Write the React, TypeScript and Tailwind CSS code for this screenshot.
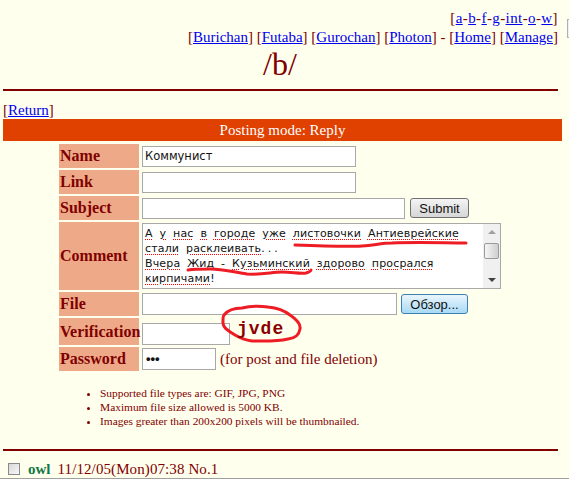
const inputCls = "block h-[21px] border border-[#a8a8a8] bg-white px-[2px] font-['DejaVu_Sans',sans-serif] text-[11.5px] text-[#111]";
const labelCls = "flex w-[80px] items-center bg-[#eeaa88] pl-px text-[16px] font-bold text-[#800000]";
const linkCls = "text-[#0000ee] underline";

function Row({ label, height, children }: { label: string; height: string; children: React.ReactNode }) {
  return (
    <div className={`flex gap-[3px] ${height}`}>
      <div className={labelCls}>{label}</div>
      <div className="flex items-center">{children}</div>
    </div>
  );
}

function Word({ children }: { children: string }) {
  return <span className="underline decoration-[#ff0000] decoration-dotted decoration-1 underline-offset-2">{children}</span>;
}

export default function App() {
  return (
    <div className="relative h-[479px] w-[569px] overflow-hidden bg-[#ffffee] font-['Liberation_Serif',serif] text-[15px] leading-[18px] text-[#800000]">
      {/* top links */}
      <div className="pt-[9px] pr-[11px] text-right leading-[19px]">
        <div className="tracking-[0.4px]">
          [<a className={linkCls}>a</a>-<a className={linkCls}>b</a>-<a className={linkCls}>f</a>-<a className={linkCls}>g</a>-<a className={linkCls}>int</a>-<a className={linkCls}>o</a>-<a className={linkCls}>w</a>]
        </div>
        <div>
          [<a className={linkCls}>Burichan</a>] [<a className={linkCls}>Futaba</a>] [<a className={linkCls}>Gurochan</a>] [<a className={linkCls}>Photon</a>] - [<a className={linkCls}>Home</a>] [<a className={linkCls}>Manage</a>]
        </div>
      </div>
      <div className="-mt-px pl-[263px] text-[32px] leading-[36px]">/b/</div>
      <div className="mx-[3px] mt-[7px] w-[555px] border-t-2 border-[#800000]" />
      <div className="mt-[10px] pl-[3px]">
        [<a className={linkCls}>Return</a>]
      </div>
      <div className="mx-[3px] h-[22px] w-[559px] bg-[#e04000] text-center leading-[22px] text-white">Posting mode: Reply</div>

      {/* post form */}
      <div className="mt-[3px] flex flex-col gap-[2px] pl-[59px]">
        <Row label="Name" height="h-[24px]">
          <div className={`${inputCls} w-[214px] leading-[19px]`}>Коммунист</div>
        </Row>
        <Row label="Link" height="h-[24px]">
          <div className={`${inputCls} w-[214px]`} />
        </Row>
        <Row label="Subject" height="h-[24px]">
          <div className={`${inputCls} w-[263px]`} />
          <button className="ml-[5px] h-[20px] w-[59px] rounded-[3px] border border-[#707070] bg-gradient-to-b from-[#f4f4f4] to-[#d6d6d6] font-['Liberation_Sans',sans-serif] text-[13px] leading-none text-[#111]">Submit</button>
        </Row>
        <Row label="Comment" height="h-[68px]">
          <div className="relative flex h-[66px] w-[359px] border border-[#a8a8a8] bg-white">
            <div className="flex-1 overflow-hidden px-[2px] pt-[2px] font-['DejaVu_Sans',sans-serif] text-[11px] leading-[15px] tracking-[0.15px] [word-spacing:3.2px] text-[#111]">
              <div><Word>А</Word> <Word>у</Word> <Word>нас</Word> <Word>в</Word> <Word>городе</Word> <Word>уже</Word> <Word>листовочки</Word> <Word>Антиеврейские</Word></div>
              <div><Word>стали</Word> <Word>расклеивать</Word><span className="tracking-[3px]">...</span></div>
              <div><Word>Вчера</Word> <Word>Жид</Word> - <Word>Кузьминский</Word> <Word>здорово</Word> <Word>просрался</Word></div>
              <div><Word>кирпичами</Word>!</div>
            </div>
            {/* textarea scrollbar */}
            <div className="flex w-[17px] flex-col items-center justify-between bg-[#f0f0f0] py-[6px]">
              <div className="h-0 w-0 border-x-[4px] border-b-[4px] border-x-transparent border-b-[#a0a0a0]" />
              <div className="absolute right-[1px] top-[19px] h-[16px] w-[15px] rounded-[2px] border border-[#9a9a9a] bg-gradient-to-r from-[#f6f6f6] to-[#cfcfcf]" />
              <div className="h-0 w-0 border-x-[4px] border-t-[4px] border-x-transparent border-t-[#404040]" />
            </div>
          </div>
        </Row>
        <Row label="File" height="h-[24px]">
          <div className={`${inputCls} h-[22px] w-[255px]`} />
          <button className="ml-[4px] h-[20px] w-[67px] rounded-[3px] border border-[#3c7fb1] bg-gradient-to-b from-[#eaf6fd] to-[#a7d9f5] font-['Liberation_Sans',sans-serif] text-[13px] leading-none text-[#111]">Обзор...</button>
        </Row>
        <Row label="Verification" height="h-[27px]">
          <div className={`${inputCls} mt-[4px] h-[22px] w-[88px]`} />
        </Row>
        <Row label="Password" height="h-[24px]">
          <div className={`${inputCls} h-[22px] w-[74px] pl-[3px] font-['Liberation_Sans',sans-serif] text-[13px] font-bold leading-[20px]`}>•••</div>
          <span className="ml-[4px]">(for post and file deletion)</span>
        </Row>
      </div>

      <ul className="mt-[15px] flex list-disc flex-col pl-[100px] text-[11.4px] leading-[14px]">
        <li>Supported file types are: GIF, JPG, PNG</li>
        <li>Maximum file size allowed is 5000 KB.</li>
        <li>Images greater than 200x200 pixels will be thumbnailed.</li>
      </ul>
      <div className="mx-[3px] mt-[21px] w-[555px] border-t-2 border-[#800000]" />
      <div className="mt-[9px] flex items-center pl-[8px]">
        <div className="h-[12px] w-[12px] border border-[#8a8a8a] bg-gradient-to-br from-[#d8d8d8] to-[#f8f8f8]" />
        <span className="ml-[8px] font-bold text-[#117743]">owl</span>
        <span className="ml-[7px] tracking-[0.1px]">11/12/05(Mon)07:38 No.1</span>
      </div>
      <div className="absolute bottom-0 left-0 h-px w-full bg-[#a0a0a0]" />
      {/* sliver of the page scrollbar */}
      <div className="absolute right-0 top-[19px] h-[19px] w-[2px] border-y border-l border-[#b0b0b0] bg-[#f0f0f0]" />

      {/* pen marks drawn over the screenshot */}
      <svg className="pointer-events-none absolute left-0 top-0" width="569" height="479" fill="none" stroke="#ee1c25" strokeWidth="3" strokeLinecap="round" strokeLinejoin="round">
        <path d="M295 245 C320 246 345 247 362 246 C375 245 382 243 392 243 C420 242 445 243 466 243" />
        <path d="M188 270 C195 269 202 269 208 269 C220 268 232 272 247 274 C262 275 272 272 282 272 C292 272 300 274 306 273 C309 272 311 271 311 270" />
        <path d="M224 315 C228 310 235 308 242 308 C250 306 260 306 268 307 C278 308 285 311 290 315 C296 319 301 324 300 329 C299 335 296 338 288 339 C275 342 262 341 252 341 C245 340 240 338 235 335 C229 331 222 328 223 321 C223 318 223 316 224 315 Z" />
      </svg>
      <span className="absolute left-[237px] top-[319px] font-['Liberation_Mono',monospace] text-[18px] font-bold leading-[20px] tracking-[1px] text-[#8b0000]">jvde</span>
    </div>
  );
}
